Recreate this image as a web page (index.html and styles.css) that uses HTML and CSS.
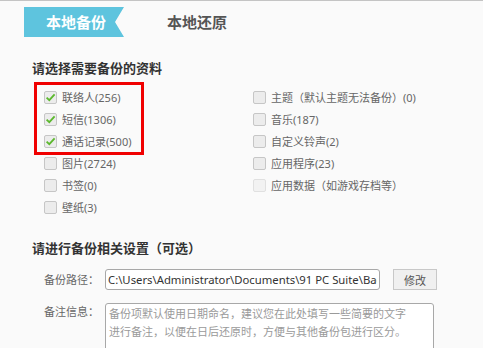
FILE: index.html
```html
<!DOCTYPE html>
<html lang="zh-CN">
<head>
<meta charset="utf-8">
<link rel="stylesheet" href="styles.css">
</head>
<body>
<div class="tabs">
  <div class="tab tab-active">本地备份</div>
  <div class="tab tab-plain">本地还原</div>
</div>

<div class="section-title">请选择需要备份的资料</div>

<div class="options">
  <div class="col col-left">
    <div class="mark-box"></div>
    <label class="opt"><span class="cb checked"><svg viewBox="0 0 13 13" width="13" height="13"><path d="M2.6 6.6 L5.3 9.2 L10.6 3.3" fill="none" stroke="#5cb82e" stroke-width="1.8"/></svg></span><span>联络人(256)</span></label>
    <label class="opt"><span class="cb checked"><svg viewBox="0 0 13 13" width="13" height="13"><path d="M2.6 6.6 L5.3 9.2 L10.6 3.3" fill="none" stroke="#5cb82e" stroke-width="1.8"/></svg></span><span>短信(1306)</span></label>
    <label class="opt"><span class="cb checked"><svg viewBox="0 0 13 13" width="13" height="13"><path d="M2.6 6.6 L5.3 9.2 L10.6 3.3" fill="none" stroke="#5cb82e" stroke-width="1.8"/></svg></span><span>通话记录(500)</span></label>
    <label class="opt"><span class="cb"></span><span>图片(2724)</span></label>
    <label class="opt"><span class="cb"></span><span>书签(0)</span></label>
    <label class="opt"><span class="cb"></span><span>壁纸(3)</span></label>
  </div>
  <div class="col">
    <label class="opt"><span class="cb"></span><span>主题（默认主题无法备份）(0)</span></label>
    <label class="opt"><span class="cb"></span><span>音乐(187)</span></label>
    <label class="opt"><span class="cb"></span><span>自定义铃声(2)</span></label>
    <label class="opt"><span class="cb"></span><span>应用程序(23)</span></label>
    <label class="opt opt-disabled"><span class="cb cb-disabled"></span><span>应用数据（如游戏存档等）</span></label>
  </div>
</div>

<div class="section-title section-title-2">请进行备份相关设置（可选）</div>

<div class="field-row">
  <span class="field-label">备份路径：</span>
  <input class="path-input" type="text" readonly value="C:\Users\Administrator\Documents\91 PC Suite\Backup">
  <button class="btn" type="button">修改</button>
</div>
<div class="field-row field-row-top">
  <span class="field-label">备注信息：</span>
  <div class="note">备份项默认使用日期命名，建议您在此处填写一些简要的文字进行备注，以便在日后还原时，方便与其他备份包进行区分。</div>
</div>
</body>
</html>
```

FILE: styles.css
```css
html, body {
  margin: 0;
  padding: 0;
}
body {
  width: 483px;
  height: 348px;
  overflow: hidden;
  background: #fafafa;
  border-top: 1px solid #c4c4c4;
  box-sizing: border-box;
  font-family: "Noto Sans", "Noto Sans CJK SC", sans-serif;
  font-size: 11px;
  color: #666;
}
.tabs {
  display: flex;
  align-items: center;
  padding: 6px 0 0 24px;
}
.tab {
  height: 30px;
  line-height: 30px;
  font-size: 15px;
  font-weight: bold;
  font-family: "Noto Sans CJK SC", sans-serif;
}
.tab-active {
  width: 100px;
  box-sizing: border-box;
  padding-left: 22px;
  background: #5ec4de;
  color: #fff;
  clip-path: polygon(0 0, 100% 0, 91% 50%, 100% 100%, 0 100%);
}
.tab-plain {
  margin-left: 43px;
  color: #555;
}
.section-title {
  margin: 22px 0 0 32px;
  height: 18px;
  line-height: 18px;
  font-size: 13px;
  font-weight: bold;
  color: #333;
  font-family: "Noto Sans CJK SC", sans-serif;
}
.section-title-2 {
  margin-top: 21px;
}
.options {
  display: grid;
  grid-template-columns: 209px auto;
  padding-left: 44px;
  margin-top: 9px;
}
.col {
  display: flex;
  flex-direction: column;
}
.col-left {
  position: relative;
}
.mark-box {
  position: absolute;
  left: -10px;
  top: -4px;
  width: 104px;
  height: 67px;
  border: 3px solid #f00000;
}
.opt {
  display: flex;
  align-items: center;
  gap: 5px;
  height: 22px;
  white-space: nowrap;
  font-size: 11px;
}
.cb {
  width: 13px;
  height: 13px;
  box-sizing: border-box;
  border: 1px solid #c6c6c6;
  border-radius: 2px;
  background: #ececec;
  display: flex;
  align-items: center;
  justify-content: center;
  flex: none;
}
.cb svg {
  display: block;
  margin: -1px;
}
.cb-disabled {
  border-color: #e0e0e0;
  background: #f2f2f2;
}
.field-row {
  display: flex;
  align-items: center;
  padding-left: 44px;
  margin-top: 12px;
}
.field-row-top {
  align-items: flex-start;
  margin-top: 13px;
}
.field-label {
  width: 61px;
  flex: none;
  line-height: 18px;
  color: #666;
}
.path-input {
  width: 275px;
  height: 21px;
  box-sizing: border-box;
  border: 1px solid #a8a8a8;
  border-radius: 3px;
  background: #fff;
  padding: 0 2px;
  font-family: "Noto Sans", "Noto Sans CJK SC", sans-serif;
  font-size: 11.3px;
  color: #333;
  outline: none;
}
.btn {
  margin-left: 13px;
  width: 44px;
  height: 21px;
  box-sizing: border-box;
  border: 1px solid #c8c8c8;
  border-radius: 0;
  background: #f0f0f0;
  font-family: "Noto Sans CJK SC", sans-serif;
  font-size: 11px;
  color: #555;
  padding: 0;
}
.note {
  width: 329px;
  height: 70px;
  flex: none;
  box-sizing: border-box;
  border: 1px solid #a8a8a8;
  border-radius: 3px;
  background: #fff;
  padding: 0 20px 0 3px;
  font-family: "Noto Sans CJK SC", sans-serif;
  font-size: 11px;
  line-height: 18px;
  color: #9a9a9a;
  overflow: hidden;
}
```
